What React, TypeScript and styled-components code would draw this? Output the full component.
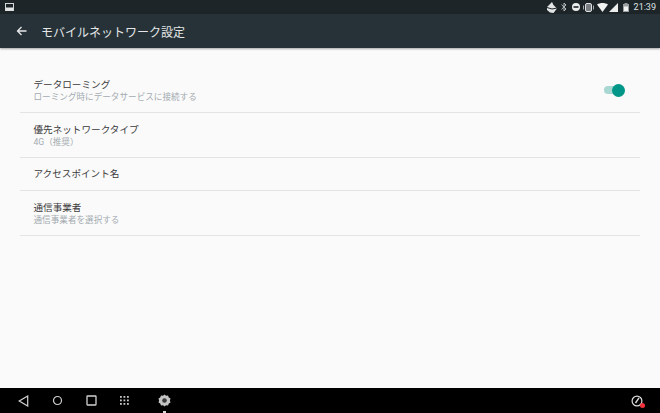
import styled, { createGlobalStyle } from "styled-components";

const GlobalStyle = createGlobalStyle`
    html, body {
        margin: 0;
        padding: 0;
        background: #fafafa;
    }

    body {
        font-family: "Roboto", "Noto Sans CJK JP", sans-serif;
    }
`;

const settings = [
    {title: "データローミング", summary: "ローミング時にデータサービスに接続する", toggle: true},
    {title: "優先ネットワークタイプ", summary: "4G（推奨）"},
    {title: "アクセスポイント名"},
    {title: "通信事業者", summary: "通信事業者を選択する"},
];

function Row({title, summary, toggle}: { title: string, summary?: string, toggle?: boolean }) {
    return (
        <StyledRow $compact={!summary}>
            <div>
                <RowTitle $compact={!summary}>{title}</RowTitle>
                {summary && <RowSummary>{summary}</RowSummary>}
            </div>
            {toggle && (
                <Toggle>
                    <ToggleThumb/>
                </Toggle>
            )}
        </StyledRow>
    );
}

export default function App() {
    return (
        <Screen>
            <GlobalStyle/>
            <StatusBar>
                <svg width="9" height="8" viewBox="0 0 9 8">
                    <rect x="0.5" y="0.5" width="8" height="7" fill="#1d2529" stroke="#d5d8d9"/>
                    <rect x="1" y="4.5" width="7" height="3" fill="#e4e6e7"/>
                </svg>
                <StatusIcons>
                    <StatusGlyph $before={0} width="10" height="11" viewBox="0 0 10 11">
                        <path d="M0 5 5 0l1.500 3L10 6.500 6.500 11 3 10.500 0 8z" fill="#e2e4e5"/>
                        <path d="M0 5.500 5 7l5-1" stroke="#1d2529" fill="none"/>
                    </StatusGlyph>
                    <StatusGlyph $before={4} width="6" height="10" viewBox="0 0 6 10">
                        <path d="M.5 2.700 5 7 3 9V1L5 3 .5 7.300" stroke="#b4b9ba" fill="none"/>
                    </StatusGlyph>
                    <StatusGlyph $before={5} width="8" height="8" viewBox="0 0 8 8">
                        <circle cx="4" cy="4" r="4" fill="#eceeee"/>
                        <rect x="1.500" y="3.200" width="5" height="1.600" fill="#1d2529"/>
                    </StatusGlyph>
                    <StatusGlyph $before={3} width="11" height="9" viewBox="0 0 11 9">
                        <rect x="2.500" y="0.500" width="6" height="8" rx="1.500" fill="#777d80" stroke="#dfe1e2"/>
                        <path d="M.5 2.500v4M10.500 2.500v4" stroke="#a5aaab"/>
                    </StatusGlyph>
                    <StatusGlyph $before={3} width="11" height="9" viewBox="0 0 11 9">
                        <path d="M0 1.500C3.200-.5 7.800-.5 11 1.500L5.500 9z" fill="#f2f3f3"/>
                    </StatusGlyph>
                    <StatusGlyph $before={1} width="9" height="9" viewBox="0 0 9 9">
                        <path d="M9 0v9H0z" fill="#eceeee"/>
                    </StatusGlyph>
                    <StatusGlyph $before={5} width="6" height="9" viewBox="0 0 6 9">
                        <path d="M1.500 0h3v1H6v8H0V1h1.500z" fill="#9a9fa1"/>
                        <rect x="1" y="3.500" width="4" height="4.500" fill="#f2f3f3"/>
                    </StatusGlyph>
                    <Clock>21:39</Clock>
                </StatusIcons>
            </StatusBar>
            <Toolbar>
                <svg width="11" height="10" viewBox="0 0 11 10">
                    <path d="M10.500 5H1.500M5.500 1 1.500 5l4 4" stroke="#e6e8e9" strokeWidth="1.300" fill="none"/>
                </svg>
                <ToolbarTitle>モバイルネットワーク設定</ToolbarTitle>
            </Toolbar>
            <Content>
                <List>
                    {settings.map(item => <Row key={item.title} {...item}/>)}
                </List>
            </Content>
            <NavBar>
                <NavGroup>
                    <svg width="11" height="12" viewBox="0 0 11 12">
                        <path d="M9.700 1v10L1.200 6z" stroke="#d2d2d2" strokeWidth="1.200" fill="none"/>
                    </svg>
                    <svg width="11" height="11" viewBox="0 0 11 11">
                        <circle cx="5.500" cy="5.500" r="4" stroke="#d2d2d2" strokeWidth="1.200" fill="none"/>
                    </svg>
                    <svg width="11" height="11" viewBox="0 0 11 11">
                        <rect x="1" y="1" width="9" height="9" rx="0.500" stroke="#d2d2d2" strokeWidth="1.300" fill="none"/>
                    </svg>
                    <svg width="9" height="9" viewBox="0 0 9 9" fill="#c8c8c8">
                        {[0, 3.500, 7].flatMap(y => [0, 3.500, 7].map(x => (
                            <rect key={`${x}-${y}`} x={x} y={y} width="1.800" height="1.800"/>
                        )))}
                    </svg>
                    <GearButton>
                        <svg width="13" height="13" viewBox="0 0 13 13">
                            <path d="M6.500 .5 8 1.800l2-.3.800 1.900 1.700 1.100-.6 2 .6 2-1.700 1.100-.8 1.900-2-.3-1.500 1.300L5 11.200l-2 .3-.8-1.900L.5 8.500l.6-2-.6-2 1.700-1.100L3 1.500l2 .3z" fill="#c4c4c4"/>
                            <circle cx="6.500" cy="6.500" r="2.300" fill="#3a3a3a"/>
                        </svg>
                    </GearButton>
                </NavGroup>
                <GaugeIcon>
                    <svg width="12" height="12" viewBox="0 0 12 12">
                        <circle cx="6" cy="6" r="4.900" stroke="#dcdcdc" strokeWidth="1.200" fill="none"/>
                        <path d="M4.500 8 8 2.800" stroke="#dcdcdc" strokeWidth="1.400"/>
                    </svg>
                    <Badge/>
                </GaugeIcon>
            </NavBar>
        </Screen>
    );
}

const Screen = styled.div`
    width: 660px;
    height: 413px;
    display: flex;
    flex-direction: column;
    overflow: hidden;
    background: #fafafa;
`;

const StatusBar = styled.header`
    height: 14px;
    flex: none;
    display: flex;
    align-items: center;
    justify-content: space-between;
    padding: 0 4px 0 5px;
    background: #1d2529;
`;

const StatusIcons = styled.div`
    display: flex;
    align-items: center;
`;

const StatusGlyph = styled.svg<{ $before: number }>`
    margin-left: ${p => p.$before}px;
`;

const Clock = styled.span`
    margin-left: 5px;
    font-size: 9px;
    color: #dfe1e2;
`;

const Toolbar = styled.div`
    height: 34px;
    flex: none;
    display: flex;
    align-items: center;
    gap: 14px;
    padding-left: 16px;
    background: #263238;
    box-shadow: 0 1px 2px rgba(0, 0, 0, 0.35);
    position: relative;
`;

const ToolbarTitle = styled.h1`
    margin: 0;
    font-size: 12px;
    font-weight: 400;
    color: #e4e6e7;
`;

const Content = styled.main`
    flex: 1;
    padding: 20px 20px 0 19.500px;
`;

const List = styled.div`
    display: flex;
    flex-direction: column;
`;

const StyledRow = styled.div<{ $compact: boolean }>`
    height: ${p => (p.$compact ? 32 : 44)}px;
    display: flex;
    align-items: center;
    justify-content: space-between;
    padding: 0 19px 0 14px;
    border-bottom: 1px solid #e4e4e4;
`;

const RowTitle = styled.div<{ $compact: boolean }>`
    font-size: 9.600px;
    line-height: 12px;
    color: #3b3b3b;
    transform: translateY(${p => (p.$compact ? 0 : 0.5)}px);
`;

const RowSummary = styled.div`
    font-size: 8.600px;
    line-height: 12px;
    color: #a4abb1;
    transform: translateY(1px);
`;

const Toggle = styled.div`
    width: 17px;
    height: 8px;
    border-radius: 4px;
    background: #a9d8d3;
    position: relative;
`;

const ToggleThumb = styled.div`
    position: absolute;
    right: -4px;
    top: -2.500px;
    width: 13px;
    height: 13px;
    border-radius: 50%;
    background: #009688;
`;

const NavBar = styled.nav`
    height: 25px;
    flex: none;
    display: flex;
    align-items: center;
    justify-content: space-between;
    padding: 0 17px 0 18px;
    background: #000;
`;

const NavGroup = styled.div`
    display: flex;
    align-items: center;
    gap: 23px;
`;

const GearButton = styled.div`
    display: flex;
    margin-left: 6px;
    position: relative;

    &::after {
        content: "";
        position: absolute;
        left: 5px;
        bottom: -6px;
        width: 3px;
        height: 2px;
        background: #d8d8d8;
    }
`;

const GaugeIcon = styled.div`
    display: flex;
    position: relative;
`;

const Badge = styled.span`
    position: absolute;
    right: -2px;
    bottom: -1px;
    width: 5px;
    height: 5px;
    border-radius: 50%;
    background: #f0323c;
`;
